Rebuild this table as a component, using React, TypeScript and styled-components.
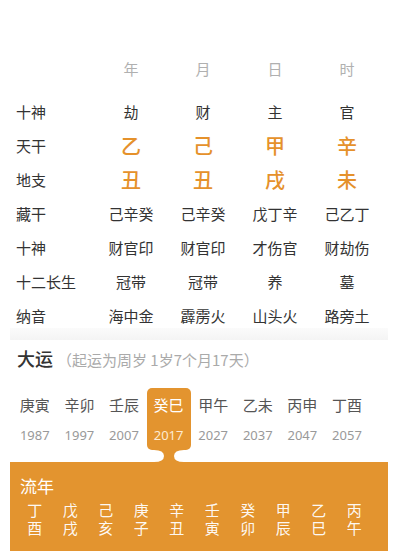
import React from "react";
import styled, { createGlobalStyle } from "styled-components";

const ORANGE = "#E3942F";

const Global = createGlobalStyle`
  html, body { margin: 0; padding: 0; background: #fff; }
  body { font-family: "Noto Sans CJK SC", "Noto Sans", sans-serif; -webkit-font-smoothing: antialiased; }
`;

const Page = styled.div`
  width: 401px;
  height: 551px;
  overflow: hidden;
  padding-top: 51px;
  box-sizing: border-box;
`;

const Table = styled.div`
  display: grid;
  grid-template-columns: 95px repeat(4, 72px);
  grid-template-rows: 43px repeat(7, 34px);
`;

const HeadCell = styled.div`
  height: 34px;
  display: flex;
  align-items: center;
  justify-content: center;
  color: #b0b0b0;
  font-size: 15px;
`;

const Label = styled.div`
  display: flex;
  align-items: center;
  padding-left: 16px;
  color: #333;
  font-size: 15px;
`;

const Cell = styled.div<{ $accent?: boolean }>`
  display: flex;
  align-items: center;
  justify-content: center;
  color: ${(p) => (p.$accent ? "#E5912B" : "#333")};
  font-size: ${(p) => (p.$accent ? "20px" : "15px")};
  font-weight: ${(p) => (p.$accent ? 500 : 400)};
`;

const Band = styled.div`
  margin: -4px 13px 0 10px;
  height: 12px;
  background: linear-gradient(#fbfbfb, #f4f4f4);
`;

const TitleRow = styled.div`
  display: flex;
  align-items: baseline;
  padding-left: 17px;
  height: 24px;
  line-height: 24px;
  margin-top: 6px;
`;

const Title = styled.span`
  font-size: 18px;
  color: #333;
  font-weight: 500;
`;

const Sub = styled.span`
  font-size: 15px;
  color: #aaa;
  margin-left: 4px;
`;

const DayunRow = styled.div`
  display: grid;
  grid-template-columns: repeat(8, 44.6px);
  padding-left: 12.5px;
  margin-top: 18px;
`;

const DayunCol = styled.div`
  display: flex;
  flex-direction: column;
  align-items: center;
`;

const DayunItem = styled.div<{ $active?: boolean }>`
  width: 44px;
  height: 62px;
  box-sizing: border-box;
  padding-top: 6px;
  border-radius: 5px;
  display: flex;
  flex-direction: column;
  align-items: center;
  background: ${(p) => (p.$active ? ORANGE : "transparent")};
`;

const Gz = styled.div<{ $active?: boolean }>`
  font-size: 15px;
  line-height: 22px;
  color: ${(p) => (p.$active ? "#fff" : "#555")};
`;

const Year = styled.div<{ $active?: boolean }>`
  font-family: "Noto Sans", "Roboto", sans-serif;
  font-size: 13px;
  line-height: 20px;
  margin-top: 9px;
  color: ${(p) => (p.$active ? "#fdebd2" : "#999")};
`;

const Neck = styled.svg`
  display: block;
  width: 30px;
  height: 12px;
`;

const Panel = styled.div`
  margin: 0 13px 0 10px;
  background: ${ORANGE};
  height: 100px;
  padding-top: 12px;
  box-sizing: border-box;
`;

const PanelTitle = styled.div`
  color: #fff;
  font-size: 17px;
  line-height: 24px;
  padding-left: 10px;
`;

const LnGrid = styled.div`
  display: grid;
  grid-template-columns: repeat(10, 35.5px);
  padding-left: 7px;
  margin-top: 3px;
`;

const LnCell = styled.div`
  display: flex;
  flex-direction: column;
  align-items: center;
  color: rgba(255, 255, 255, 0.95);
  font-size: 15px;
  line-height: 18px;
`;

const rows: { label: string; vals: string[]; accent?: boolean }[] = [
  { label: "十神", vals: ["劫", "财", "主", "官"] },
  { label: "天干", vals: ["乙", "己", "甲", "辛"], accent: true },
  { label: "地支", vals: ["丑", "丑", "戌", "未"], accent: true },
  { label: "藏干", vals: ["己辛癸", "己辛癸", "戊丁辛", "己乙丁"] },
  { label: "十神", vals: ["财官印", "财官印", "才伤官", "财劫伤"] },
  { label: "十二长生", vals: ["冠带", "冠带", "养", "墓"] },
  { label: "纳音", vals: ["海中金", "霹雳火", "山头火", "路旁土"] },
];

const dayun = [
  ["庚寅", "1987"],
  ["辛卯", "1997"],
  ["壬辰", "2007"],
  ["癸巳", "2017"],
  ["甲午", "2027"],
  ["乙未", "2037"],
  ["丙申", "2047"],
  ["丁酉", "2057"],
];

const liunian = ["丁酉", "戊戌", "己亥", "庚子", "辛丑", "壬寅", "癸卯", "甲辰", "乙巳", "丙午"];

export default function App() {
  return (
    <Page>
      <Global />
      <Table>
        <HeadCell />
        {["年", "月", "日", "时"].map((h) => (
          <HeadCell key={h}>{h}</HeadCell>
        ))}
        {rows.map((r, i) => (
          <React.Fragment key={i}>
            <Label>{r.label}</Label>
            {r.vals.map((v, j) => (
              <Cell key={j} $accent={r.accent}>
                {v}
              </Cell>
            ))}
          </React.Fragment>
        ))}
      </Table>
      <Band />
      <TitleRow>
        <Title>大运</Title>
        <Sub>（起运为周岁 1岁7个月17天）</Sub>
      </TitleRow>
      <DayunRow>
        {dayun.map(([g, y], i) => {
          const active = i === 3;
          return (
            <DayunCol key={y}>
              <DayunItem $active={active}>
                <Gz $active={active}>{g}</Gz>
                <Year $active={active}>{y}</Year>
              </DayunItem>
              {active ? (
                <Neck viewBox="0 0 30 12">
                  <path d="M0 0 H30 Q20 0 20 6 Q20 12 30 12 H0 Q10 12 10 6 Q10 0 0 0 Z" fill={ORANGE} />
                </Neck>
              ) : (
                <Neck as="div" />
              )}
            </DayunCol>
          );
        })}
      </DayunRow>
      <Panel>
        <PanelTitle>流年</PanelTitle>
        <LnGrid>
          {liunian.map((s) => (
            <LnCell key={s}>
              <span>{s[0]}</span>
              <span>{s[1]}</span>
            </LnCell>
          ))}
        </LnGrid>
      </Panel>
    </Page>
  );
}
